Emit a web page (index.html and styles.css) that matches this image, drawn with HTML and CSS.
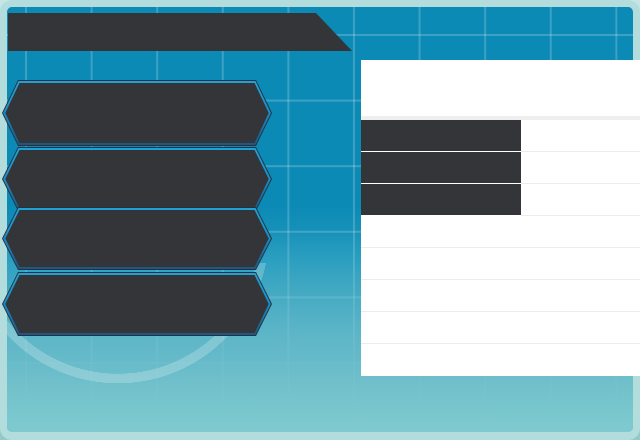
FILE: index.html
```html
<!DOCTYPE html>
<html lang="en">
<head>
<meta charset="utf-8">
<title>Menu</title>
<link rel="stylesheet" href="styles.css">
</head>
<body>
<svg class="defs" width="0" height="0" aria-hidden="true">
  <defs>
    <linearGradient id="edge" x1="0" y1="0" x2="0" y2="1">
      <stop offset="0" stop-color="#1fa2d8"/>
      <stop offset="0.5" stop-color="#1a8cc6"/>
      <stop offset="1" stop-color="#1f5582"/>
    </linearGradient>
  </defs>
</svg>
<div class="frame">
  <div class="left">
    <div class="titlebar"></div>
    <div class="menu">
      <div class="btn b1">
        <svg width="271" height="66" viewBox="0 0 271 66">
          <polygon points="16,0 254,0 270,33 254,66 16,66 0,33" fill="#25323d"/>
          <polygon points="16.5,1 253.5,1 268.9,33 253.5,65 16.5,65 1.1,33" fill="url(#edge)"/>
          <polygon points="17.5,3 252.5,3 266.7,33 252.5,63 17.5,63 3.3,33" fill="#333538"/>
        </svg>
      </div>
      <div class="btn b2">
        <svg width="271" height="64" viewBox="0 0 271 64">
          <polygon points="16,0 254,0 270,32 254,64 16,64 0,32" fill="#25323d"/>
          <polygon points="16.5,1 253.5,1 268.9,32 253.5,63 16.5,63 1.1,32" fill="url(#edge)"/>
          <polygon points="17.5,3 252.5,3 266.7,32 252.5,61 17.5,61 3.3,32" fill="#333538"/>
        </svg>
      </div>
      <div class="btn b3">
        <svg width="271" height="63" viewBox="0 0 271 63">
          <polygon points="16,0 254,0 270,31.5 254,63 16,63 0,31.5" fill="#25323d"/>
          <polygon points="16.5,1 253.5,1 268.9,31.5 253.5,62 16.5,62 1.1,31.5" fill="url(#edge)"/>
          <polygon points="17.5,3 252.5,3 266.7,31.5 252.5,60 17.5,60 3.3,31.5" fill="#333538"/>
        </svg>
      </div>
      <div class="btn b4">
        <svg width="271" height="64" viewBox="0 0 271 64">
          <polygon points="16,0 254,0 270,32 254,64 16,64 0,32" fill="#25323d"/>
          <polygon points="16.5,1 253.5,1 268.9,32 253.5,63 16.5,63 1.1,32" fill="url(#edge)"/>
          <polygon points="17.5,3 252.5,3 266.7,32 252.5,61 17.5,61 3.3,32" fill="#333538"/>
        </svg>
      </div>
    </div>
  </div>
  <div class="panel">
    <div class="panel-head"></div>
    <div class="row"><div class="cell dark"></div><div class="cell"></div></div>
    <div class="row"><div class="cell dark"></div><div class="cell"></div></div>
    <div class="row"><div class="cell dark"></div><div class="cell"></div></div>
    <div class="row"><div class="cell"></div></div>
    <div class="row"><div class="cell"></div></div>
    <div class="row"><div class="cell"></div></div>
    <div class="row"><div class="cell"></div></div>
    <div class="row"><div class="cell"></div></div>
  </div>
</div>
</body>
</html>
```

FILE: styles.css
```css
* {
  box-sizing: border-box;
}

html,
body {
  margin: 0;
  padding: 0;
}

body {
  width: 640px;
  height: 440px;
  overflow: hidden;
  background: linear-gradient(#c6e6e6, #94c8c9);
  font-family: "Liberation Sans", Arial, sans-serif;
}

.defs {
  display: block;
  width: 0;
  height: 0;
  overflow: hidden;
}

.frame {
  width: 640px;
  height: 440px;
  border: 7px solid #b3dcdd;
  border-bottom-width: 8px;
  border-radius: 12px;
  display: flex;
  align-items: flex-start;
  background:
    radial-gradient(circle at 111px -31px,
      rgba(255, 255, 255, 0) 141.5px,
      rgba(255, 255, 255, 0.22) 142px,
      rgba(255, 255, 255, 0.22) 151px,
      rgba(255, 255, 255, 0) 151.5px) 0 256px / 100% 172px no-repeat,
    linear-gradient(to bottom,
      rgba(11, 138, 181, 0) 198px,
      rgba(42, 158, 192, 0.2) 251px,
      rgba(69, 170, 195, 0.4) 288px,
      rgba(102, 186, 201, 0.82) 353px,
      rgba(118, 196, 204, 0.97) 393px,
      rgba(126, 202, 207, 1) 425px),
    linear-gradient(90deg, rgba(255, 255, 255, 0.2) 0 2px, rgba(255, 255, 255, 0) 2px) 18px 0 / 65.6px 100%,
    linear-gradient(180deg, rgba(255, 255, 255, 0.2) 0 2px, rgba(255, 255, 255, 0) 2px) 0 27px / 100% 65.6px,
    linear-gradient(to bottom,
      #0b8ab5 198px,
      #148fb8 223px,
      #2a9ec0 251px,
      #45aac3 288px,
      #66bac9 353px,
      #76c4cc 393px,
      #7ecacf 425px);
}

.left {
  width: 354px;
  flex-shrink: 0;
}

.titlebar {
  margin: 6px 0 0 1px;
  width: 344px;
  height: 38px;
  background: #333538;
  clip-path: polygon(0 0, 308px 0, 100% 100%, 0 100%);
}

.menu {
  margin: 29px 0 0 -5px;
  display: flex;
  flex-direction: column;
}

.btn {
  width: 271px;
}

.btn svg {
  display: block;
}

.b2 {
  margin-top: 1px;
}

.b3 {
  margin-top: -4px;
}

.b4 {
  margin-top: 2px;
}

.panel {
  width: 279px;
  flex-shrink: 0;
  margin-top: 53px;
  background: #ffffff;
}

.panel-head {
  height: 60px;
  border-bottom: 4px solid #efefef;
}

.row {
  display: flex;
  height: 32px;
}

.cell {
  flex: 1;
  border-bottom: 1px solid #ececec;
}

.cell.dark {
  flex: 0 0 160px;
  background: #333538;
  border-bottom-color: #ffffff;
}

.row:last-child .cell {
  border-bottom: 0;
}
```
